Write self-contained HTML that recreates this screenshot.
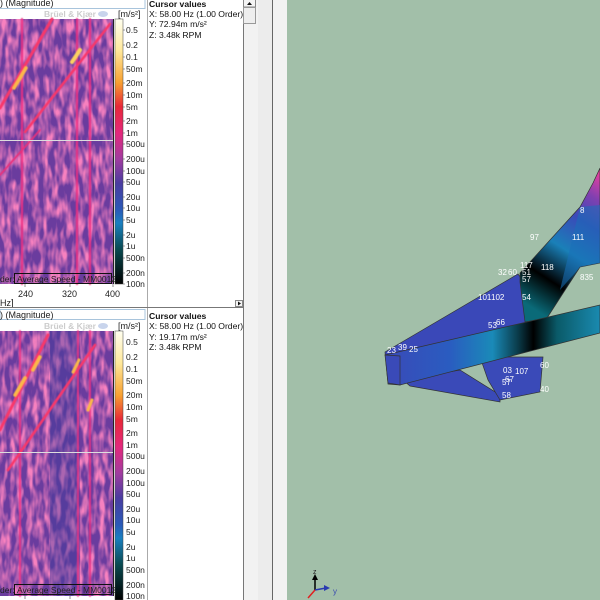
<!DOCTYPE html>
<html><head><meta charset="utf-8"><style>
html,body{margin:0;padding:0;width:600px;height:600px;overflow:hidden;background:#fff;font-family:"Liberation Sans",sans-serif}
</style></head><body>
<svg width="600" height="600" style="position:absolute;left:0;top:0" xmlns="http://www.w3.org/2000/svg" font-family="Liberation Sans, sans-serif">
<defs>
<filter id="n1" x="0" y="0" width="100%" height="100%"><feTurbulence type="fractalNoise" baseFrequency="0.18 0.06" numOctaves="2" seed="3"/><feColorMatrix type="matrix" values="0 0 0 0 0.93  0 0 0 0 0.22  0 0 0 0 0.52  2.6 0 0 0 -0.95"/></filter>
<filter id="n2" x="0" y="0" width="100%" height="100%"><feTurbulence type="fractalNoise" baseFrequency="0.18 0.06" numOctaves="2" seed="9"/><feColorMatrix type="matrix" values="0 0 0 0 0.93  0 0 0 0 0.22  0 0 0 0 0.52  2.6 0 0 0 -0.95"/></filter>
<filter id="bl" x="-10%" y="-10%" width="120%" height="120%"><feGaussianBlur stdDeviation="0.5"/></filter>
<linearGradient id="cb" x1="0" y1="0" x2="0" y2="1">
<stop offset="0" stop-color="#fffff0"/><stop offset="0.12" stop-color="#ffe89a"/><stop offset="0.24" stop-color="#f8a030"/><stop offset="0.33" stop-color="#e82838"/><stop offset="0.43" stop-color="#e4287c"/><stop offset="0.53" stop-color="#a03ca0"/><stop offset="0.62" stop-color="#4a3ca0"/><stop offset="0.72" stop-color="#2a5ab8"/><stop offset="0.77" stop-color="#1a80c0"/><stop offset="0.87" stop-color="#0a4a50"/><stop offset="1" stop-color="#000"/>
</linearGradient>
<linearGradient id="bar" x1="385" y1="0" x2="600" y2="0" gradientUnits="userSpaceOnUse">
<stop offset="0" stop-color="#3a4ab8"/><stop offset="0.3" stop-color="#2a5cc0"/><stop offset="0.5" stop-color="#1a8ab8"/><stop offset="0.62" stop-color="#0a3a48"/><stop offset="0.69" stop-color="#000"/><stop offset="0.8" stop-color="#0a5a68"/><stop offset="1" stop-color="#1a8ab0"/>
</linearGradient>
<linearGradient id="up" x1="520" y1="300" x2="600" y2="175" gradientUnits="userSpaceOnUse">
<stop offset="0" stop-color="#0a6a78"/><stop offset="0.22" stop-color="#000"/><stop offset="0.45" stop-color="#1a80b8"/><stop offset="0.68" stop-color="#3a4ab8"/><stop offset="0.85" stop-color="#8040b0"/><stop offset="1" stop-color="#e040a0"/>
</linearGradient>
</defs>

<rect x="243" y="0" width="44" height="600" fill="#f2f2f2"/>
<rect x="258" y="0" width="15" height="600" fill="#ececec"/>
<line x1="243.5" y1="0" x2="243.5" y2="600" stroke="#777"/>
<line x1="272.5" y1="0" x2="272.5" y2="600" stroke="#666"/>
<rect x="287" y="0" width="313" height="600" fill="#a2bfa9"/>

<g stroke="#333" stroke-width="0.7">
<polygon points="403,380 460,370 500,395 500,402 410,386" fill="#3a4ab8"/>
<polygon points="480,357 543,357 540,392 500,400 488,380" fill="#3a4ab8"/>
<polygon points="385,352 518,274 524,282 535,300 520,335 400,385 388,384" fill="#3a48b8"/>
<polygon points="520,273 580,207 593,183 600,168 600,263 580,267 547,318 525,322 520,282" fill="url(#up)"/>
<polygon points="580,207 600,205 600,263 580,267 560,290" fill="#1a70b8" opacity="0.55" stroke="none"/>
<polygon points="385,355 600,305 600,333 400,385" fill="url(#bar)"/>
<polygon points="385,355 400,356 400,385 388,383" fill="#3a4ab8"/>
</g>
<g fill="#fff" font-size="8">
<text x="580" y="213">8</text><text x="530" y="240">97</text><text x="572" y="240">111</text>
<text x="520" y="268">117</text><text x="541" y="270">118</text><text x="580" y="280">835</text>
<text x="498" y="275">32</text><text x="508" y="275">60</text><text x="522" y="275">51</text><text x="522" y="282">57</text>
<text x="478" y="300">101</text><text x="491" y="300">102</text><text x="522" y="300">54</text>
<text x="496" y="325">66</text><text x="488" y="328">53</text>
<text x="387" y="353">23</text><text x="398" y="350">39</text><text x="409" y="352">25</text>
<text x="540" y="368">60</text><text x="503" y="373">03</text><text x="515" y="374">107</text><text x="505" y="382">67</text>
<text x="502" y="385">57</text><text x="540" y="392">40</text><text x="502" y="398">58</text>
</g>
<g stroke-width="1.5">
<line x1="315" y1="590" x2="315" y2="578" stroke="#000"/><polygon points="312,580 315,574 318,580" fill="#000"/>
<line x1="315" y1="590" x2="326" y2="588" stroke="#2a3ab0"/><polygon points="324,585 330,588 324,591" fill="#2a3ab0"/>
<line x1="315" y1="590" x2="308" y2="598" stroke="#e02020"/>
</g>
<text x="313" y="574" font-size="7" fill="#222">z</text><text x="333" y="594" font-size="8" fill="#3a4ab0">y</text>

<!-- top spectrogram -->
<g>
<rect x="0" y="19" width="113" height="265" fill="#6a3c9e"/>
<rect x="0" y="19" width="113" height="265" filter="url(#n1)"/>
<g filter="url(#bl)" stroke-linecap="round" fill="none">
<path d="M22 19 V284 M77 19 V284 M90 19 V284" stroke="#f03080" stroke-width="2.2" opacity="0.85"/>
<path d="M0 108 L52 19" stroke="#f8386a" stroke-width="3"/>
<path d="M14 88 L26 68" stroke="#fbb848" stroke-width="3.5"/>
<path d="M25 132 L110 24" stroke="#f8386a" stroke-width="2.6"/>
<path d="M72 62 L80 50" stroke="#fcd060" stroke-width="4"/>
<path d="M0 175 L40 130" stroke="#e8307a" stroke-width="1.8"/>
</g>
<line x1="0" y1="140.5" x2="113" y2="140.5" stroke="#ddd"/>
<rect x="14.5" y="273.5" width="97" height="10" fill="none" stroke="#111"/>
<text x="0" y="282" font-size="8.5" fill="#222">der:</text><text x="17" y="282" font-size="8.5" fill="#222">Average Speed - MM0012</text>
<rect x="113" y="19" width="1" height="265" fill="#222"/>
<rect x="115" y="19" width="8" height="265" fill="url(#cb)" stroke="#444" stroke-width="0.5"/>
</g>
<!-- bottom spectrogram -->
<g>
<rect x="0" y="331" width="113" height="265" fill="#6a3c9e"/>
<rect x="0" y="331" width="113" height="265" filter="url(#n2)"/>
<rect x="50" y="331" width="30" height="265" fill="#3a3c9a" opacity="0.4"/>
<g filter="url(#bl)" stroke-linecap="round" fill="none">
<path d="M20 331 V596 M90 331V596 M78 331 V596" stroke="#f03080" stroke-width="2" opacity="0.8"/>
<path d="M0 430 L48 335" stroke="#f8386a" stroke-width="3"/>
<path d="M15 395 L25 378 M33 370 L40 357" stroke="#fbb848" stroke-width="3.5"/>
<path d="M8 470 L95 345" stroke="#f8386a" stroke-width="2.6"/>
<path d="M73 372 L79 360 M88 410 L92 400" stroke="#fbb848" stroke-width="3"/>
</g>
<line x1="0" y1="452.5" x2="113" y2="452.5" stroke="#ddd"/>
<rect x="14.5" y="584.5" width="97" height="10" fill="none" stroke="#111"/>
<text x="0" y="593" font-size="8.5" fill="#222">der:</text><text x="17" y="593" font-size="8.5" fill="#222">Average Speed - MM0012</text>
<rect x="113" y="331" width="1" height="265" fill="#222"/>
<rect x="115" y="331" width="8" height="269" fill="url(#cb)" stroke="#444" stroke-width="0.5"/>
</g>

<g font-size="8.5" fill="#222">
<text x="126" y="33">0.5</text><text x="126" y="48">0.2</text><text x="126" y="60">0.1</text><text x="126" y="72">50m</text><text x="126" y="86">20m</text><text x="126" y="98">10m</text><text x="126" y="110">5m</text><text x="126" y="124">2m</text><text x="126" y="136">1m</text><text x="126" y="147">500u</text><text x="126" y="162">200u</text><text x="126" y="174">100u</text><text x="126" y="185">50u</text><text x="126" y="200">20u</text><text x="126" y="211">10u</text><text x="126" y="223">5u</text><text x="126" y="238">2u</text><text x="126" y="249">1u</text><text x="126" y="261">500n</text><text x="126" y="276">200n</text><text x="126" y="287">100n</text>
<text x="126" y="345">0.5</text><text x="126" y="360">0.2</text><text x="126" y="372">0.1</text><text x="126" y="384">50m</text><text x="126" y="398">20m</text><text x="126" y="410">10m</text><text x="126" y="422">5m</text><text x="126" y="436">2m</text><text x="126" y="448">1m</text><text x="126" y="459">500u</text><text x="126" y="474">200u</text><text x="126" y="486">100u</text><text x="126" y="497">50u</text><text x="126" y="512">20u</text><text x="126" y="523">10u</text><text x="126" y="535">5u</text><text x="126" y="550">2u</text><text x="126" y="561">1u</text><text x="126" y="573">500n</text><text x="126" y="588">200n</text><text x="126" y="599">100n</text>
</g>
<g stroke="#444" stroke-width="0.6">
<path d="M123 30h2M123 45h2M123 57h2M123 69h2M123 83h2M123 95h2M123 107h2M123 121h2M123 133h2M123 144h2M123 159h2M123 171h2M123 182h2M123 197h2M123 208h2M123 220h2M123 235h2M123 246h2M123 258h2M123 273h2M123 284h2"/>
<path d="M25 284v3M70 284v3M113 284v3M25 596v3M70 596v3"/>
</g>
<g font-size="9" fill="#222"><text x="18" y="297">240</text><text x="62" y="297">320</text><text x="105" y="297">400</text><text x="0" y="306">Hz]</text></g>
<line x1="12.5" y1="299" x2="12.5" y2="307" stroke="#444"/>

<rect x="-1" y="-1" width="146" height="9.5" fill="#fff" stroke="#a8c4dc"/>
<text x="0" y="6" font-size="9" fill="#222">) (Magnitude)</text>
<text x="44" y="17" font-size="8.5" fill="#ccc" font-weight="bold">Brüel &amp; Kjær</text><ellipse cx="103" cy="14" rx="5" ry="3" fill="#c8d4ec"/>
<text x="118" y="17" font-size="9" fill="#222">[m/s²]</text>
<rect x="0" y="309.5" width="145" height="10" fill="#fff" stroke="#a8c4dc"/>
<text x="0" y="318" font-size="9" fill="#222">) (Magnitude)</text>
<text x="44" y="329" font-size="8.5" fill="#ccc" font-weight="bold">Brüel &amp; Kjær</text><ellipse cx="103" cy="326" rx="5" ry="3" fill="#c8d4ec"/>
<text x="118" y="329" font-size="9" fill="#222">[m/s²]</text>

<line x1="147.5" y1="0" x2="147.5" y2="600" stroke="#aaa"/>
<g font-size="8.6" fill="#111">
<text x="149" y="7" font-weight="bold">Cursor values</text>
<text x="149" y="17">X: 58.00 Hz (1.00 Order)</text>
<text x="149" y="27">Y: 72.94m m/s²</text>
<text x="149" y="38">Z: 3.48k RPM</text>
<text x="149" y="319" font-weight="bold">Cursor values</text>
<text x="149" y="329">X: 58.00 Hz (1.00 Order)</text>
<text x="149" y="340">Y: 19.17m m/s²</text>
<text x="149" y="350">Z: 3.48k RPM</text>
</g>
<rect x="243.5" y="-1" width="12" height="8" fill="#f4f4f4" stroke="#888"/>
<polygon points="247,5 249.5,2 252,5" fill="#111"/>
<rect x="243.5" y="7.5" width="12" height="16" fill="#eee" stroke="#999"/>
<line x1="0" y1="307.5" x2="243" y2="307.5" stroke="#777"/>
<rect x="235.5" y="300.5" width="7" height="6" fill="#f4f4f4" stroke="#888"/>
<polygon points="238,301.5 241,303.5 238,305.5" fill="#111"/>
</svg>
</body></html>
